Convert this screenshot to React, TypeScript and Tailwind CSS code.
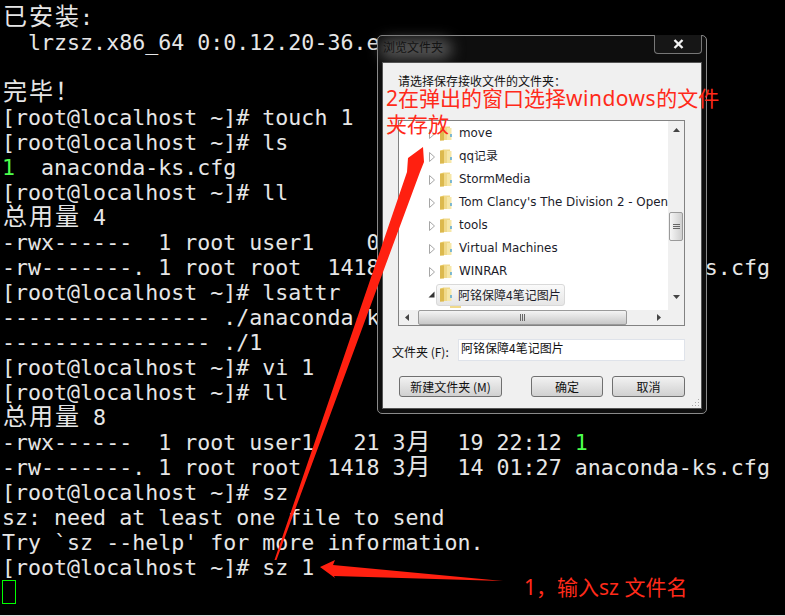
import React from "react";

const lines: string[] = [
  "已安装:",
  "  lrzsz.x86_64 0:0.12.20-36.e",
  "",
  "完毕！",
  "[root@localhost ~]# touch 1",
  "[root@localhost ~]# ls",
  "@1  anaconda-ks.cfg",
  "[root@localhost ~]# ll",
  "总用量 4",
  "-rwx------  1 root user1    0",
  "-rw-------. 1 root root  1418                         s.cfg",
  "[root@localhost ~]# lsattr",
  "---------------- ./anaconda-k",
  "---------------- ./1",
  "[root@localhost ~]# vi 1",
  "[root@localhost ~]# ll",
  "总用量 8",
  "-rwx------  1 root user1   21 3月  19 22:12 #1",
  "-rw-------. 1 root root  1418 3月  14 01:27 anaconda-ks.cfg",
  "[root@localhost ~]# sz",
  "sz: need at least one file to send",
  "Try `sz --help' for more information.",
  "[root@localhost ~]# sz 1",
];

function TermLine({ text }: { text: string }) {
  let green = "";
  let body = text;
  if (text.startsWith("@")) {
    green = "1";
    body = text.slice(2);
  }
  const hash = body.indexOf("#1");
  let tail = "";
  if (hash >= 0) {
    tail = "1";
    body = body.slice(0, hash);
  }
  return (
    <div className="h-[25px] whitespace-pre leading-[25px]">
      {green && <span className="text-[#4dff4d]">{green}</span>}
      {Array.from(body).map((c, i) =>
        /[^\x00-\x7f]/.test(c) ? (
          <span key={i} className="inline-block w-[26px] text-center text-[24px] leading-[25px]">
            {c}
          </span>
        ) : (
          <span key={i}>{c}</span>
        )
      )}
      {tail && <span className="text-[#4dff4d]">{tail}</span>}
    </div>
  );
}

function Folder() {
  return (
    <svg width="14" height="17" viewBox="0 0 14 17" className="shrink-0">
      <path d="M1 2.5 L5 1.5 L5 15 L1 15.5 Z" fill="#e8c860" />
      <path d="M5 1.5 H11 V15 H5 Z" fill="#f0d98a" />
      <path d="M1 3 H5 V15.5 H1 Z" fill="#dcb94e" />
      <path d="M8 3 H12.5 V15 H8 Z" fill="#f6e7a8" />
      <path d="M12 9 V12" stroke="#4aa3d8" strokeWidth="1.4" />
    </svg>
  );
}

function Chevron({ open }: { open?: boolean }) {
  return open ? (
    <svg width="7" height="7" viewBox="0 0 7 7" className="shrink-0">
      <path d="M6.5 0.5 V6.5 H0.5 Z" fill="#333" />
    </svg>
  ) : (
    <svg width="6" height="10" viewBox="0 0 6 10" className="shrink-0">
      <path d="M0.5 0.5 L5.5 5 L0.5 9.5 Z" fill="#fff" stroke="#a6a6a6" />
    </svg>
  );
}

const rows = ["move", "qq记录", "StormMedia", "Tom Clancy's The Division 2 - Open", "tools", "Virtual Machines", "WINRAR"];

function DlgButton({ label, className }: { label: string; className: string }) {
  return (
    <div
      className={
        "flex h-[21px] items-center justify-center rounded-[3px] border border-[#707070] bg-gradient-to-b from-[#f2f2f2] to-[#d0d0d0] text-[12px] text-[#111] " +
        className
      }
    >
      {label}
    </div>
  );
}

function Dialog() {
  return (
    <div className="absolute left-[377px] top-[35px] flex h-[379px] w-[330px] flex-col rounded-[5px] border border-[#8a8a8a] bg-[#0e0e0e] px-[4px] pb-[4px] font-['Noto_Sans_CJK_SC',sans-serif]">
      <div className="relative h-[26px] shrink-0">
        <div className="absolute left-[-2px] top-[3px] h-[20px] w-[72px] rounded-full bg-[#555] blur-[7px]" />
        <span className="absolute left-[1px] top-[2px] text-[12px] leading-[18px] text-[#141414]">浏览文件夹</span>
        <div className="absolute right-[0px] top-[-1px] flex h-[19px] w-[48px] items-center justify-center rounded-b-[4px] border border-t-0 border-[#777] bg-[#161616]">
          <svg width="11" height="10" viewBox="0 0 11 10">
            <path d="M1.5 1 L9.5 9 M9.5 1 L1.5 9" stroke="#f2f2f2" strokeWidth="2.4" />
          </svg>
        </div>
      </div>
      <div className="relative flex flex-1 flex-col border border-[#555] bg-[#f0f0f0] pl-[15px] pr-[16px]">
        <div className="mb-[30px] mt-[9px] h-[18px] text-[12px] leading-[18px] text-[#111]">请选择保存接收文件的文件夹：</div>
        <div className="flex h-[206px] w-[287px] flex-col border border-[#828282] bg-white font-['DejaVu_Sans',sans-serif] text-[11.9px] text-[#1c1c2a]">
          <div className="flex h-[189px] overflow-hidden">
            <div className="flex-1 overflow-hidden pt-[1px]">
              {rows.map((r) => (
                <div key={r} className="flex h-[23px] items-center whitespace-pre pl-[30px]">
                  <Chevron />
                  <span className="ml-[4px]">
                    <Folder />
                  </span>
                  <span className="ml-[6px] font-['DejaVu_Sans','Noto_Sans_CJK_SC',sans-serif]">{r}</span>
                </div>
              ))}
              <div className="flex h-[23px] items-center pl-[29px]">
                <Chevron open />
                <div className="ml-[1px] flex h-[22px] w-[129px] items-center rounded-[3px] border border-[#d9d9d9] bg-gradient-to-b from-[#fafafa] to-[#e6e6e6] pl-[2px]">
                  <Folder />
                  <span className="ml-[5px] font-['Noto_Sans_CJK_SC',sans-serif] text-[12px]">阿铭保障4笔记图片</span>
                </div>
              </div>
              <div className="ml-[51px] h-[2px] w-[11px] bg-[#f0d98a]" />
            </div>
            <div className="flex w-[16px] flex-col items-center bg-[#f0f0f0] pt-[7px]">
              <svg width="7" height="4" viewBox="0 0 7 4" className="shrink-0">
                <path d="M3.5 0 L7 4 H0 Z" fill="#444" />
              </svg>
              <div className="mt-[80px] flex h-[29px] w-[14px] shrink-0 flex-col items-center justify-center gap-[1px] rounded-[2px] border border-[#9a9a9a] bg-gradient-to-r from-[#f6f6f6] to-[#cfcfcf]">
                <div className="h-px w-[7px] bg-[#666]" />
                <div className="h-px w-[7px] bg-[#666]" />
                <div className="h-px w-[7px] bg-[#666]" />
              </div>
              <svg width="7" height="4" viewBox="0 0 7 4" className="mt-[54px] shrink-0">
                <path d="M3.5 4 L7 0 H0 Z" fill="#444" />
              </svg>
            </div>
          </div>
          <div className="flex h-[15px] items-center bg-[#f0f0f0] pl-[6px]">
            <svg width="4" height="7" viewBox="0 0 4 7" className="shrink-0">
              <path d="M0 3.5 L4 0 V7 Z" fill="#444" />
            </svg>
            <div className="ml-[9px] flex h-[15px] w-[209px] items-center justify-center gap-[1px] rounded-[2px] border border-[#9a9a9a] bg-gradient-to-b from-[#f4f4f4] to-[#c8c8c8]">
              <div className="h-[7px] w-px bg-[#666]" />
              <div className="h-[7px] w-px bg-[#666]" />
              <div className="h-[7px] w-px bg-[#666]" />
            </div>
            <svg width="4" height="7" viewBox="0 0 4 7" className="ml-[30px] shrink-0">
              <path d="M4 3.5 L0 0 V7 Z" fill="#444" />
            </svg>
          </div>
        </div>
        <div className="ml-[-6px] mt-[13px] flex h-[22px] items-center text-[12px] text-[#111]">
          <span className="w-[66px] whitespace-pre pt-[4px]">文件夹 (F):</span>
          <div className="flex h-[22px] w-[227px] items-center border border-[#dfe3ea] bg-white pb-[4px] pl-[2px] leading-[18px]">
            阿铭保障4笔记图片
          </div>
        </div>
        <div className="ml-[1px] mt-[15px] flex">
          <DlgButton label="新建文件夹 (M)" className="w-[103px]" />
          <DlgButton label="确定" className="ml-[29px] w-[72px]" />
          <DlgButton label="取消" className="ml-[9px] w-[73px]" />
        </div>
        <svg width="9" height="9" viewBox="0 0 9 9" className="absolute bottom-[1px] right-[1px]">
          <path d="M7 1h1v1H7zM4 4h1v1H4zM7 4h1v1H7zM1 7h1v1H1zM4 7h1v1H4zM7 7h1v1H7z" fill="#a8a8a8" />
        </svg>
      </div>
    </div>
  );
}

export default function App() {
  return (
    <div className="relative h-[616px] w-[785px] overflow-hidden border-b border-[#dcdcdc] bg-black">
      <div className="pl-[2px] pt-[5px] font-['DejaVu_Sans_Mono','Noto_Sans_CJK_SC',monospace] text-[21.6px] text-[#e6e6e6]">
        {lines.map((l, i) => (
          <TermLine key={i} text={l} />
        ))}
        <div className="h-[24px] w-[14px] border border-[#00ff00]" />
      </div>
      <Dialog />
      <svg width="785" height="616" viewBox="0 0 785 616" className="absolute left-0 top-0">
        <polygon points="274.5,560 407,172 408,158 423,147 424,162 420,172 276.5,560" fill="#ff2010" />
        <polygon points="320,567 335,560 333,565 503,581 334,576 335,578" fill="#ff2010" />
      </svg>
      <div className="absolute left-[386px] top-[85px] font-['Noto_Sans','Noto_Sans_CJK_SC',sans-serif] text-[21px] leading-[26px] text-[#ff2a1a]">
        <div className="whitespace-nowrap">
          2在弹出的窗口选择<span className="tracking-[0.5px]">windows</span>的文件
        </div>
        <div>夹存放</div>
      </div>
      <div className="absolute left-[524px] top-[574px] whitespace-pre font-['Noto_Sans','Noto_Sans_CJK_SC',sans-serif] text-[21px] leading-[26px] text-[#ff2a1a]">
        1，输入sz 文件名
      </div>
    </div>
  );
}
